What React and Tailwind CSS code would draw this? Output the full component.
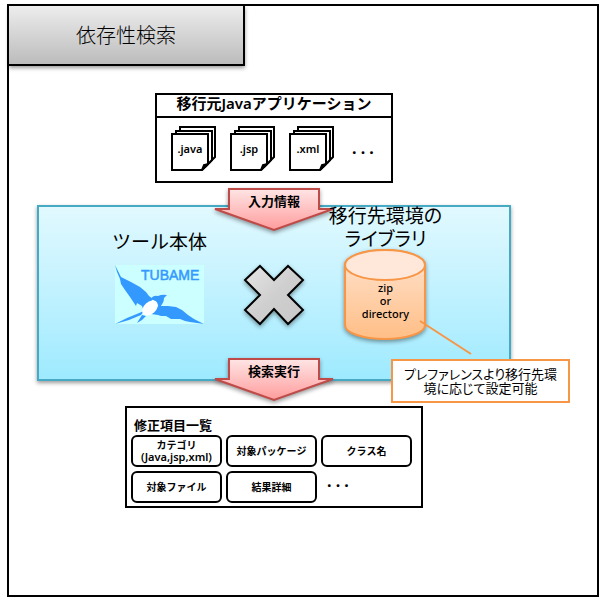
import React from "react";

const gothic = "font-['Noto_Sans_CJK_JP',sans-serif]";
const proportional = "[font-feature-settings:'palt']";
const label = "font-['Noto_Sans','Noto_Sans_CJK_JP',sans-serif]";

function FileIcon({ name }) {
  return (
    <li className="relative h-[46px] w-[46px]">
      <svg className="absolute inset-0" width="46" height="46" viewBox="0 0 46 46" fill="#fff" stroke="#000" strokeWidth="2">
        <path d="M9 1H44V31L38 37H9Z" />
        <path d="M5 5H41V34L34 41H5Z" />
        <path d="M1 8H37V38L31 44H1Z" />
        <path d="M31 44L33 39L37 38Z" fill="#000" />
      </svg>
      <span className={`${label} relative block w-[38px] pt-[15px] text-center text-[11px] leading-4 font-semibold`}>{name}</span>
    </li>
  );
}

function FlowArrow({ id, className, children }) {
  return (
    <div className={`absolute left-1/2 h-[46px] w-[126px] -translate-x-1/2 ${className}`}>
      <svg className="absolute inset-0 overflow-visible drop-shadow-[0_2px_2px_rgba(0,0,0,0.4)]" width="126" height="46" viewBox="0 0 126 46">
        <defs>
          <linearGradient id={id} x1="0" y1="0" x2="0" y2="1">
            <stop offset="0" stopColor="#ffe5e5" />
            <stop offset="1" stopColor="#ff9c9c" />
          </linearGradient>
        </defs>
        <path d="M18 2H108V22H122L63 43L4 22H18Z" fill={`url(#${id})`} stroke="#be4b48" strokeWidth="2" />
      </svg>
      <p className={`${label} relative pt-1 text-center text-[13px] leading-5 font-semibold`}>{children}</p>
    </div>
  );
}

function TubameLogo() {
  return (
    <svg width="89" height="59" viewBox="0 0 89 59" role="img" aria-label="TUBAME">
      <rect width="89" height="59" fill="#ccffff" />
      <text x="26" y="15" fontSize="14" fill="#3399ff" stroke="#3399ff" strokeWidth="0.5" fontFamily="Liberation Sans, sans-serif">TUBAME</text>
      <g fill="#3399ff">
        <path d="M0 0L3 6L6 12L16 17L25 22L31 27L34 31L38 34L34 40L28 44L27 41L22 38L21 41L19 38L15 32L10 25L6 19L5 14L2 7Z" />
        <path d="M43 41L53 41L61 42L67 45L73 50L79 54L89 59L82 58L75 57L70 56L65 54L60 54L56 54L51 51L46 51L43 50L36 49Z" />
        <path d="M36 34Q38 30 43 31Q47 29 52 30L49 33Q49 38 44 43Q42 36 36 34Z" />
        <path d="M29 46L26 50L14 55L0 59L12 53Z" />
        <path d="M27 50L31 51L27 55L22 58Z" />
      </g>
      <ellipse cx="35" cy="43" rx="9" ry="6" transform="rotate(-42 35 43)" fill="#fff" />
    </svg>
  );
}

function Cross() {
  return (
    <svg className="overflow-visible drop-shadow-[0_2px_2px_rgba(0,0,0,0.4)]" width="60" height="60" viewBox="0 0 60 60" aria-hidden="true">
      <defs>
        <linearGradient id="cross" x1="0" y1="0" x2="1" y2="1">
          <stop offset="0" stopColor="#e6e6e6" />
          <stop offset="0.5" stopColor="#cfcfcf" />
          <stop offset="1" stopColor="#c8c8c8" />
        </linearGradient>
      </defs>
      <path d="M16 1L30 15L44 1L59 15L44 30L59 45L44 59L30 44L16 59L1 45L16 30L1 15Z" fill="url(#cross)" stroke="#000" strokeWidth="2" />
    </svg>
  );
}

function Library() {
  return (
    <div className="relative h-[92px] w-[82px]">
      <svg className="absolute inset-0 overflow-visible drop-shadow-[0_2px_2px_rgba(0,0,0,0.4)]" width="82" height="92" viewBox="0 0 82 92">
        <defs>
          <linearGradient id="drum" x1="0" y1="0" x2="0" y2="1">
            <stop offset="0" stopColor="#ffe4d0" />
            <stop offset="1" stopColor="#ffbe86" />
          </linearGradient>
        </defs>
        <path d="M1 16V76C1 84 19 90 41 90S81 84 81 76V16C81 8 63 1 41 1S1 8 1 16Z" fill="url(#drum)" stroke="#f79646" strokeWidth="2" />
        <ellipse cx="41" cy="16" rx="40" ry="15" fill="#ffe8d9" stroke="#f79646" strokeWidth="2" />
      </svg>
      <p className={`${label} relative pt-8 text-center text-[11px] leading-[13px] font-medium`}>
        zip<br />or<br />directory
      </p>
    </div>
  );
}

function Item({ children }) {
  return (
    <li className={`${label} flex h-8 items-center justify-center rounded-md border-2 border-black text-center text-[10px] leading-3 font-semibold`}>
      <span>{children}</span>
    </li>
  );
}

export default function App() {
  return (
    <main className="flex min-h-screen bg-white pt-1 pr-px pl-[7px] text-black">
      <div className="grow border-2 border-black">
        <h1 className={`${gothic} flex h-[60px] w-[236px] items-center justify-center border-r-2 border-b-2 border-black bg-linear-to-b from-[#ededed] to-[#bcbcbc] text-xl font-light shadow-[0_2px_4px_rgba(0,0,0,0.4)]`}>
          依存性検索
        </h1>

        <div className="mt-[27px] ml-7 flex w-[474px] flex-col items-center">
          <section className="h-[90px] w-[238px] border-2 border-black">
            <h2 className={`${label} h-[23px] border-b-2 border-black text-center text-[15px] leading-4 font-semibold`}>移行元Javaアプリケーション</h2>
            <ul className="flex gap-[13px] pt-2 pl-3.5">
              <FileIcon name=".java" />
              <FileIcon name=".jsp" />
              <FileIcon name=".xml" />
              <li className={`${label} pt-2.5 pl-1 text-base leading-6 font-bold`}>. . .</li>
            </ul>
          </section>

          <section className="relative mt-[22px] h-44 w-full border-2 border-[#46aac5] bg-linear-to-b from-[#e1f9ff] to-[#9eeaff] shadow-[0_2px_4px_rgba(0,0,0,0.4)]">
            <FlowArrow id="arrow-input" className="-top-5">入力情報</FlowArrow>
            <FlowArrow id="arrow-search" className="-bottom-6">検索実行</FlowArrow>
            <div className="relative grid grid-cols-[1fr_60px_1fr] justify-items-center px-10">
              <div className="flex flex-col items-center pt-[22px] pr-1">
                <h2 className={`${gothic} mb-3 text-[19px] leading-6`}>ツール本体</h2>
                <TubameLogo />
              </div>
              <div className="pt-[58px]"><Cross /></div>
              <div className="flex flex-col items-center pr-0.5">
                <h2 className={`${gothic} ${proportional} -mt-1 text-center text-[19px] leading-[23px] whitespace-nowrap`}>移行先環境の<br />ライブラリ</h2>
                <Library />
              </div>
            </div>
            <svg className="absolute top-[112px] left-[379px]" width="56" height="38" viewBox="0 0 56 38" aria-hidden="true">
              <path d="M2 2L53 35" stroke="#f79646" strokeWidth="2" />
            </svg>
            <p className={`${gothic} ${proportional} absolute top-[152px] left-[352px] h-11 w-[179px] border-2 border-[#f79646] bg-white pt-1.5 text-center text-[13px] leading-[14px] whitespace-nowrap`}>
              プレファレンスより移行先環<br />境に応じて設定可能
            </p>
          </section>

          <section className="mt-[25px] h-[102px] w-[298px] border-2 border-black px-1">
            <h2 className={`${label} pt-[7px] pl-[3px] text-[13px] leading-5 font-semibold`}>修正項目一覧</h2>
            <ul className="grid grid-cols-[repeat(3,91px)] gap-1">
              <Item>カテゴリ<br /><span className="text-[11px]">(Java,jsp,xml)</span></Item>
              <Item>対象パッケージ</Item>
              <Item>クラス名</Item>
              <Item>対象ファイル</Item>
              <Item>結果詳細</Item>
              <li className={`${label} pl-1.5 text-base leading-5 font-bold`}>. . .</li>
            </ul>
          </section>
        </div>
      </div>
    </main>
  );
}
